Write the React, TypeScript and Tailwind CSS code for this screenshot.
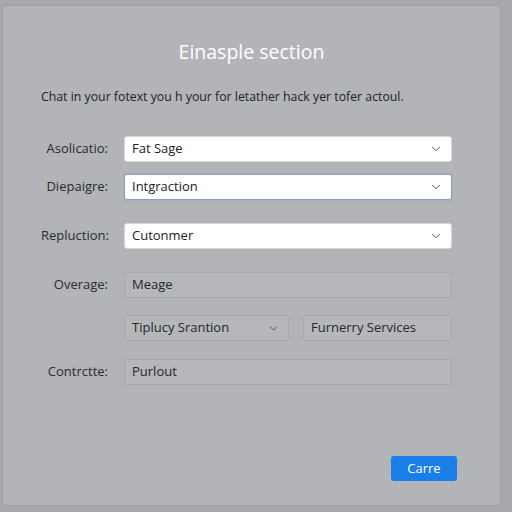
import React from 'react';
import { ChevronDown } from 'lucide-react';

const font = { fontFamily: '"Open Sans", "Noto Sans", sans-serif' };

interface RowProps {
  label?: string;
  className?: string;
  children: React.ReactNode;
}

const Row: React.FC<RowProps> = ({ label, className, children }) => (
  <div className={`flex items-center ${className || ''}`}>
    <div className="w-[67px] shrink-0 text-right text-[13px] text-[#2a2b2d]">{label}</div>
    <div className="ml-[16px] flex-1">{children}</div>
  </div>
);

const SelectBox: React.FC<{ value: string; focused?: boolean }> = ({ value, focused }) => (
  <div
    className={`flex h-[26px] items-center justify-between rounded-[3px] border bg-white pl-[7px] pr-[8px] text-[13px] text-[#1f2023] ${
      focused ? 'border-[#8d9fb8] shadow-[0_0_0_1px_rgba(140,160,190,0.25)]' : 'border-[#d4d6da]'
    }`}
  >
    <span>{value}</span>
    <ChevronDown className="h-[14px] w-[14px] text-[#444]" strokeWidth={1.6} />
  </div>
);

const MutedBox: React.FC<{ value: string; chevron?: boolean }> = ({ value, chevron }) => (
  <div className="flex h-[26px] items-center justify-between rounded-[3px] border border-[#a6a8ac] bg-[#b5b7bb] pl-[7px] pr-[8px] text-[13px] text-[#26272a]">
    <span>{value}</span>
    {chevron && <ChevronDown className="h-[13px] w-[13px] text-[#444]" strokeWidth={1.6} />}
  </div>
);

export default function App() {
  return (
    <div className="h-[512px] w-[512px] bg-[#a7a9ad] pl-[3px] pt-[6px]" style={font}>
      <div className="flex h-[499px] w-[497px] flex-col rounded-[3px] bg-[#b2b4b8] pl-[38px] pr-[48px] pt-[32px] shadow-[0_0_2px_rgba(0,0,0,0.15)]">
        <h1 className="-ml-[38px] -mr-[48px] text-center text-[19.5px] leading-[28px] text-white">Einasple section</h1>
        <p className="mt-[22px] text-[12.3px] leading-[18px] text-[#222326]">
          Chat in your fotext you h your for letather hack yer tofer actoul.
        </p>

        <Row label="Asolicatio:" className="mt-[30px]">
          <SelectBox value="Fat Sage" />
        </Row>
        <Row label="Diepaigre:" className="mt-[12px]">
          <SelectBox value="Intgraction" focused />
        </Row>
        <Row label="Repluction:" className="mt-[23px]">
          <SelectBox value="Cutonmer" />
        </Row>
        <Row label="Overage:" className="mt-[23px]">
          <MutedBox value="Meage" />
        </Row>
        <Row className="mt-[17px]">
          <div className="flex gap-[14px]">
            <div className="w-[165px]">
              <MutedBox value="Tiplucy Srantion" chevron />
            </div>
            <div className="flex-1">
              <MutedBox value="Furnerry Services" />
            </div>
          </div>
        </Row>
        <Row label="Contrctte:" className="mt-[18px]">
          <MutedBox value="Purlout" />
        </Row>

        <div className="mt-[71px] flex justify-end">
          <button className="-mr-[5px] h-[25px] w-[66px] rounded-[3px] bg-[#1a7ee8] text-[13px] text-white">
            Carre
          </button>
        </div>
      </div>
    </div>
  );
}
